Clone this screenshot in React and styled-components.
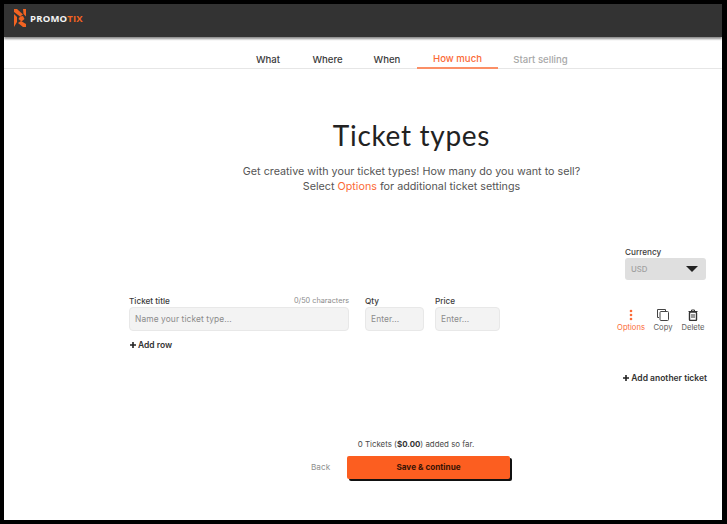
import React from "react";
import styled, { createGlobalStyle } from "styled-components";

const Global = createGlobalStyle`
  html, body { margin: 0; padding: 0; background: #000; }
  * { box-sizing: border-box; }
  body { font-family: Inter, "Liberation Sans", sans-serif; }
`;
const Frame = styled.div`
  width: 727px; height: 524px; background: #000; padding: 4px 5px 4px 4px; overflow: hidden;
`;
const Page = styled.div`
  width: 718px; height: 516px; background: #fff; display: flex; flex-direction: column; position: relative;
`;
const Header = styled.header`
  height: 33px; flex: none; background: #333; display: flex; align-items: center; padding: 0 0 5px 10px; gap: 3px;
  box-shadow: 0 2px 2px rgba(0,0,0,.45);
`;
const Brand = styled.span`
  font: 700 9.5px "Open Sans", sans-serif; letter-spacing: .2px; color: #f4f4f4;
  b { color: #f26322; font-weight: 700; }
`;
const Nav = styled.nav`
  height: 32px; flex: none; border-bottom: 1px solid #e6e6e6; display: flex; padding-left: 234px;
`;
const Tab = styled.div`
  width: ${p => p.$w}px; height: 32px; display: flex; align-items: center; justify-content: center;
  padding-top: 13px;
  font-size: 9.6px; font-weight: 500; color: ${p => p.$active ? "#fb6a36" : p.$muted ? "#a8a8a8" : "#3a3a3a"};
  border-bottom: ${p => p.$active ? "2px solid #fb8f66" : "none"};
`;
const Hero = styled.section`
  display: flex; flex-direction: column; align-items: center; padding-top: 49px; margin-left: 97px;
`;
const Title = styled.h1`
  margin: 0; font: 400 28px/34px Lato, sans-serif; letter-spacing: .7px; color: #222;
`;
const Sub = styled.p`
  margin: 12px 0 0; font: 400 10.75px/15.3px Inter, sans-serif; color: #555; text-align: center;
  span { color: #fb6a36; }
`;
const CurrencyWrap = styled.div`
  align-self: flex-end; width: 81px; margin: 52px 16px 0 0;
`;
const SmallLabel = styled.div`
  font-size: 8.2px; font-weight: 500; color: #3c3c3c; line-height: 10px;
`;
const Currency = styled.div`
  height: 22px; margin-top: 1px; border-radius: 3px; background: #dfdfdf; display: flex; align-items: center;
  justify-content: space-between; padding: 0 8px 0 6px; font-size: 7.8px; color: #a0a0a0; font-weight: 500;
`;
const Caret = styled.span`
  width: 0; height: 0; border-left: 6px solid transparent; border-right: 6px solid transparent; border-top: 6px solid #222;
`;
const Row = styled.div`
  display: flex; margin: 15px 14px 0 125px; align-items: flex-start;
`;
const Field = styled.div`
  width: ${p => p.$w}px; margin-right: ${p => p.$gap}px; flex: none;
`;
const LabelRow = styled.div`
  display: flex; justify-content: space-between; align-items: center; height: 12px;
`;
const Count = styled.span`
  font-size: 7.3px; color: #8c8c8c;
`;
const Input = styled.div`
  height: 24px; margin-top: 0; background: #f3f3f3; border: 1px solid #e8e8e8; border-radius: 4px;
  display: flex; align-items: center; padding-left: 5px; font-size: 8.4px; color: #8b8b8b; letter-spacing: .1px;
`;
const Actions = styled.div`
  display: flex; margin-left: auto; gap: 0; padding-top: 14px;
`;
const Action = styled.div`
  width: ${p => p.$w}px; display: flex; flex-direction: column; align-items: center; gap: 2px;
  font-size: 7.6px; color: ${p => p.$active ? "#fb6a36" : "#5c5c5c"};
  svg { display: block; }
`;
const AddLink = styled.div`
  display: flex; align-items: center; gap: 1px; font-size: 8.5px; font-weight: 600; color: #333; line-height: 10px;
  svg { flex: none; }
`;
const AddRow = styled(AddLink)`
  margin: 8px 0 0 125px;
`;
const AddTicket = styled(AddLink)`
  align-self: flex-end; margin: 23px 15px 0 0;
`;
const Summary = styled.div`
  margin: 56px 0 0 106px; text-align: center; font-size: 7.9px; color: #4a4a4a; line-height: 10px;
  b { font-weight: 700; color: #333; }
`;
const Footer = styled.div`
  display: flex; align-items: flex-start; margin: 7px 0 0 307px;
`;
const Back = styled.div`
  width: 36px; height: 23px; display: flex; align-items: center; font-size: 8.2px; color: #8f8f8f;
`;
const Primary = styled.button`
  width: 163px; height: 23px; border: none; border-radius: 2px; background: #fc5e20; box-shadow: 2px 2px 0 #111;
  font: 700 8.2px Inter, sans-serif; color: #3a1405; padding: 0;
`;

const Plus = () => (
  <svg width="8" height="8" viewBox="0 0 8 8"><path d="M4 1v6M1 4h6" stroke="#222" strokeWidth="1.6" /></svg>
);

export default function App() {
  return (
    <Frame>
      <Global />
      <Page>
        <Header>
          <svg width="13" height="18" viewBox="0 0 13 18" fill="#f26322">
            <path d="M0 0h3l6 5.500-3 2L0 3z" />
            <path d="M9 0h3v7.500L9.500 5z" />
            <path d="M0 5l3 3v5l-3 5z" />
            <path d="M6 7.500l3-.5 1.500 3-3 2.500L4.500 10z" />
            <path d="M12 18H9l-5-4 3-2 5 3z" />
          </svg>
          <Brand>PROMO<b>TIX</b></Brand>
        </Header>
        <Nav>
          <Tab $w={60}>What</Tab>
          <Tab $w={59}>Where</Tab>
          <Tab $w={60}>When</Tab>
          <Tab $w={81} $active>How much</Tab>
          <Tab $w={85} $muted>Start selling</Tab>
        </Nav>
        <Hero>
          <Title>Ticket types</Title>
          <Sub>
            Get creative with your ticket types! How many do you want to sell?<br />
            Select <span>Options</span> for additional ticket settings
          </Sub>
        </Hero>
        <CurrencyWrap>
          <SmallLabel>Currency</SmallLabel>
          <Currency>USD<Caret /></Currency>
        </CurrencyWrap>
        <Row>
          <Field $w={220} $gap={16}>
            <LabelRow><SmallLabel>Ticket title</SmallLabel><Count>0/50 characters</Count></LabelRow>
            <Input>Name your ticket type...</Input>
          </Field>
          <Field $w={59} $gap={11}>
            <LabelRow><SmallLabel>Qty</SmallLabel></LabelRow>
            <Input>Enter...</Input>
          </Field>
          <Field $w={65} $gap={0}>
            <LabelRow><SmallLabel>Price</SmallLabel></LabelRow>
            <Input>Enter...</Input>
          </Field>
          <Actions>
            <Action $w={34} $active>
              <svg width="12" height="12" viewBox="0 0 12 12"><g fill="#fb6a36"><circle cx="6" cy="2" r="1.300" /><circle cx="6" cy="6" r="1.300" /><circle cx="6" cy="10" r="1.300" /></g></svg>
              Options
            </Action>
            <Action $w={30}>
              <svg width="14" height="12" viewBox="0 0 14 12" fill="none" stroke="#444"><path d="M3 8.500H1.500v-8h8V2" /><rect x="4" y="2.500" width="8.500" height="9" rx="1" /></svg>
              Copy
            </Action>
            <Action $w={30}>
              <svg width="12" height="12" viewBox="0 0 12 12" fill="none" stroke="#333"><path d="M1.500 2.500h9M4.500 2.500V1h3v1.500" /><rect x="2.500" y="3" width="7" height="8.500" rx="1" strokeWidth="1.400" /><path d="M5 5v4M7 5v4" /></svg>
              Delete
            </Action>
          </Actions>
        </Row>
        <AddRow><Plus />Add row</AddRow>
        <AddTicket><Plus />Add another ticket</AddTicket>
        <Summary>0 Tickets (<b>$0.00</b>) added so far.</Summary>
        <Footer>
          <Back>Back</Back>
          <Primary>Save &amp; continue</Primary>
        </Footer>
      </Page>
    </Frame>
  );
}
